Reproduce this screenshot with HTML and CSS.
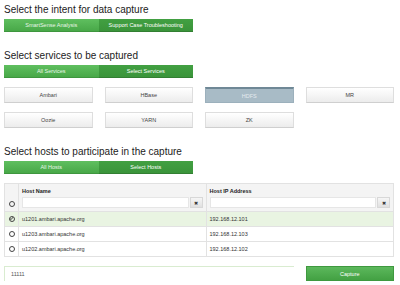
FILE: index.html
```html
<!DOCTYPE html>
<html lang="en">
<head>
    <meta charset="UTF-8">
    <title>Data Capture</title>
    <link rel="stylesheet" href="styles.css">
</head>
<body>
    <div class="page">
        <section class="block">
            <h3>Select the intent for data capture</h3>
            <div class="toggle">
                <button class="toggle-btn">SmartSense Analysis</button>
                <button class="toggle-btn active">Support Case Troubleshooting</button>
            </div>
        </section>

        <section class="block">
            <h3>Select services to be captured</h3>
            <div class="toggle">
                <button class="toggle-btn">All Services</button>
                <button class="toggle-btn active">Select Services</button>
            </div>
            <div class="services">
                <button class="svc">Ambari</button>
                <button class="svc">HBase</button>
                <button class="svc selected">HDFS</button>
                <button class="svc">MR</button>
                <button class="svc">Oozie</button>
                <button class="svc">YARN</button>
                <button class="svc">ZK</button>
            </div>
        </section>

        <section class="block">
            <h3>Select hosts to participate in the capture</h3>
            <div class="toggle">
                <button class="toggle-btn">All Hosts</button>
                <button class="toggle-btn active">Select Hosts</button>
            </div>
            <table class="hosts">
                <thead>
                    <tr>
                        <th class="check-col"><span class="radio"></span></th>
                        <th>
                            <div class="th-label">Host Name</div>
                            <div class="filter">
                                <input type="text" class="filter-input">
                                <button class="clear-btn">&#10006;</button>
                            </div>
                        </th>
                        <th>
                            <div class="th-label">Host IP Address</div>
                            <div class="filter">
                                <input type="text" class="filter-input">
                                <button class="clear-btn">&#10006;</button>
                            </div>
                        </th>
                    </tr>
                </thead>
                <tbody>
                    <tr class="row-selected">
                        <td class="check-col">
                            <span class="radio checked">
                                <svg width="5" height="5" viewBox="0 0 5 5"><path d="M1 2.6 L2.1 3.6 L4 1.2" fill="none" stroke="#333" stroke-width="0.9"/></svg>
                            </span>
                        </td>
                        <td>u1201.ambari.apache.org</td>
                        <td>192.168.12.101</td>
                    </tr>
                    <tr>
                        <td class="check-col"><span class="radio"></span></td>
                        <td>u1203.ambari.apache.org</td>
                        <td>192.168.12.103</td>
                    </tr>
                    <tr>
                        <td class="check-col"><span class="radio"></span></td>
                        <td>u1202.ambari.apache.org</td>
                        <td>192.168.12.102</td>
                    </tr>
                </tbody>
            </table>
        </section>

        <div class="capture-row">
            <input type="text" class="case-input" value="11111">
            <button class="capture-btn">Capture</button>
        </div>
    </div>
</body>
</html>
```

FILE: styles.css
```css
body {
    margin: 0;
    font-family: "Liberation Sans", Arial, sans-serif;
    color: #333;
    background: #fff;
}
.page {
    width: 390px;
    padding: 4px 6px 0 4px;
}
h3 {
    font-size: 10px;
    font-weight: normal;
    line-height: 12px;
    margin: 0 0 3px;
    color: #222;
}
.block {
    margin-bottom: 18px;
}
.toggle {
    display: flex;
    width: 189px;
    height: 13px;
}
.toggle-btn {
    flex: 1;
    margin: 0;
    padding: 0;
    border: none;
    font-family: inherit;
    font-size: 5.5px;
    color: #e8f5e8;
    background: linear-gradient(#5fbf5f, #48a848);
    border-bottom: 1px solid #3e963e;
}
.toggle-btn.active {
    color: #fff;
    background: linear-gradient(#42a042, #3a943a);
    border-bottom-color: #327f32;
}
.services {
    display: grid;
    grid-template-columns: repeat(4, 1fr);
    gap: 9px 12px;
    margin-top: 9px;
}
.svc {
    height: 16px;
    margin: 0;
    padding: 0;
    font-family: inherit;
    font-size: 5.5px;
    color: #444;
    background: linear-gradient(#ffffff, #ececec);
    border: 1px solid #dedede;
    border-bottom-color: #cfcfcf;
}
.svc.selected {
    color: #e4eaee;
    background: #a8bbc6;
    border: 1px solid #9cb0bc;
    border-top: 2px solid #6f8896;
}
.hosts {
    width: 100%;
    margin-top: 9px;
    border-collapse: collapse;
    table-layout: fixed;
    font-size: 5.5px;
}
.hosts th, .hosts td {
    border: 1px solid #e2e2e2;
    text-align: left;
}
.hosts th {
    background: #f4f4f4;
    padding: 3px 3px 3px;
    vertical-align: bottom;
    font-weight: bold;
    color: #222;
}
.hosts td {
    height: 14px;
    padding: 0 3px;
    color: #333;
}
.hosts .check-col {
    width: 7px;
    text-align: center;
    padding: 0 3px;
}
.hosts th.check-col {
    padding-bottom: 4px;
}
.th-label {
    line-height: 8px;
    margin-bottom: 2px;
}
.filter {
    display: flex;
    height: 11px;
}
.filter-input {
    flex: 1;
    min-width: 0;
    margin: 0;
    padding: 0;
    border: 1px solid #e6e6e6;
    background: #fff;
}
.clear-btn {
    width: 13px;
    margin: 0 0 0 1px;
    padding: 0;
    font-size: 5px;
    color: #333;
    background: linear-gradient(#f6f6f6, #e0e0e0);
    border: 1px solid #d8d8d8;
}
.row-selected td {
    background: #e9f4e2;
}
.radio {
    display: inline-block;
    width: 4px;
    height: 4px;
    border: 1px solid #444;
    border-radius: 50%;
    vertical-align: middle;
    position: relative;
}
.radio svg {
    position: absolute;
    left: -1px;
    top: -1px;
}
.capture-row {
    display: grid;
    grid-template-columns: repeat(4, 1fr);
    gap: 12px;
    margin-top: -9px;
}
.case-input {
    grid-column: span 3;
    height: 15px;
    margin: 0;
    padding: 0 6px;
    box-sizing: border-box;
    font-family: inherit;
    font-size: 5.5px;
    color: #555;
    border: 1px solid #d9ecd0;
    border-right: none;
    border-bottom: none;
}
.capture-btn {
    height: 15px;
    margin: 0;
    padding: 0;
    font-family: inherit;
    font-size: 5.5px;
    color: #fff;
    background: linear-gradient(#5cb85c, #43a143);
    border: 1px solid #3f993f;
}
```
